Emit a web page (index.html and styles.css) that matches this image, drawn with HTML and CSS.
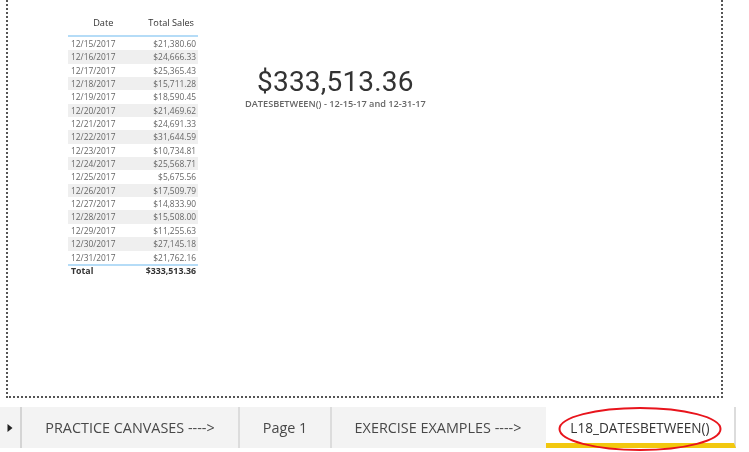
FILE: index.html
```html
<!DOCTYPE html>
<html lang="en">
<head>
<meta charset="utf-8">
<title>L18_DATESBETWEEN()</title>
<link rel="stylesheet" href="styles.css">
</head>
<body>
<main class="canvas">
  <table class="sales">
    <thead><tr><th class="date-head">Date</th><th>Total Sales</th></tr></thead>
    <tbody>
      <tr><td>12/15/2017</td><td>$21,380.60</td></tr>
      <tr><td>12/16/2017</td><td>$24,666.33</td></tr>
      <tr><td>12/17/2017</td><td>$25,365.43</td></tr>
      <tr><td>12/18/2017</td><td>$15,711.28</td></tr>
      <tr><td>12/19/2017</td><td>$18,590.45</td></tr>
      <tr><td>12/20/2017</td><td>$21,469.62</td></tr>
      <tr><td>12/21/2017</td><td>$24,691.33</td></tr>
      <tr><td>12/22/2017</td><td>$31,644.59</td></tr>
      <tr><td>12/23/2017</td><td>$10,734.81</td></tr>
      <tr><td>12/24/2017</td><td>$25,568.71</td></tr>
      <tr><td>12/25/2017</td><td>$5,675.56</td></tr>
      <tr><td>12/26/2017</td><td>$17,509.79</td></tr>
      <tr><td>12/27/2017</td><td>$14,833.90</td></tr>
      <tr><td>12/28/2017</td><td>$15,508.00</td></tr>
      <tr><td>12/29/2017</td><td>$11,255.63</td></tr>
      <tr><td>12/30/2017</td><td>$27,145.18</td></tr>
      <tr><td>12/31/2017</td><td>$21,762.16</td></tr>
    </tbody>
    <tfoot><tr><td>Total</td><td>$333,513.36</td></tr></tfoot>
  </table>
  <section class="card">
    <div class="card-value">$333,513.36</div>
    <div class="card-label">DATESBETWEEN() - 12-15-17 and 12-31-17</div>
  </section>
</main>
<nav class="tabs">
  <div class="pager"><svg width="6" height="8" viewBox="0 0 6 8"><path d="M0.5 0L5.5 4L0.5 8Z" fill="#222"/></svg></div>
  <div class="tab tab-practice">PRACTICE CANVASES ----&gt;</div>
  <div class="tab tab-page">Page 1</div>
  <div class="tab tab-exercise">EXERCISE EXAMPLES ----&gt;</div>
  <div class="tab tab-active">L18_DATESBETWEEN()</div>
  <svg class="ring" width="164" height="45" viewBox="0 0 164 45"><ellipse cx="82" cy="22" rx="80.5" ry="21" fill="none" stroke="#e8141c" stroke-width="2"/></svg>
</nav>
</body>
</html>
```
FILE: styles.css
```css
html, body {
  margin: 0;
  padding: 0;
  width: 749px;
  height: 452px;
  overflow: hidden;
  background: #fff;
  font-family: "Open Sans", "Noto Sans", sans-serif;
}

.canvas {
  box-sizing: border-box;
  display: flex;
  align-items: flex-start;
  width: 717px;
  height: 398px;
  margin-left: 6px;
  padding: 12px 0 0 60px;
  border: 2px dotted #555;
  border-top: none;
}

.sales {
  width: 130px;
  border-collapse: collapse;
  font-size: 8.4px;
  line-height: 13.34px;
  color: #666;
  filter: blur(0.4px);
}

.sales th,
.sales td {
  padding: 0 2px 0 3px;
  text-align: right;
  white-space: nowrap;
  height: 13.34px;
}

.sales th {
  height: 21px;
  padding: 0 4px 2px 0;
  font-weight: 400;
  font-size: 9.2px;
  color: #333;
  border-bottom: 2px solid #b5dcf7;
}

.sales .date-head {
  padding-right: 16px;
}

.sales td:first-child {
  text-align: left;
}

.sales tbody tr:nth-child(even) {
  background: #efefef;
}

.sales tfoot td {
  height: 11px;
  line-height: 11px;
  font-weight: 700;
  font-size: 8.8px;
  color: #333;
  border-top: 2px solid #b5dcf7;
}

.card {
  margin: 53px 0 0 47px;
  display: flex;
  flex-direction: column;
  align-items: center;
  filter: blur(0.35px);
}

.card-value {
  font-family: Roboto, sans-serif;
  font-size: 28px;
  line-height: 33px;
  letter-spacing: 0.2px;
  color: #333;
}

.card-label {
  margin-top: 1px;
  font-size: 9.2px;
  line-height: 10px;
  font-weight: 600;
  color: #666;
  white-space: nowrap;
}

.tabs {
  position: relative;
  display: flex;
  width: 736px;
  height: 41px;
  margin-top: 9px;
  background: #f3f3f3;
  font-size: 14.4px;
  color: #484848;
}

.pager {
  display: flex;
  align-items: center;
  justify-content: center;
  width: 20px;
  border-right: 2px solid #d4d4d4;
}

.tab {
  box-sizing: border-box;
  display: flex;
  align-items: center;
  justify-content: center;
  height: 100%;
  border-right: 2px solid #dcdcdc;
  white-space: nowrap;
  filter: blur(0.3px);
}

.tab-practice { width: 218px; }
.tab-page { width: 92px; }
.tab-exercise { width: 214px; padding-right: 2px; border-right: none; }

.tab-active {
  width: 190px;
  padding-top: 5px;
  background: #fff;
  border-bottom: 5px solid #f2c80f;
  font-size: 13.6px;
  color: #333;
}

.ring {
  position: absolute;
  left: 558px;
  top: 0;
}
```
